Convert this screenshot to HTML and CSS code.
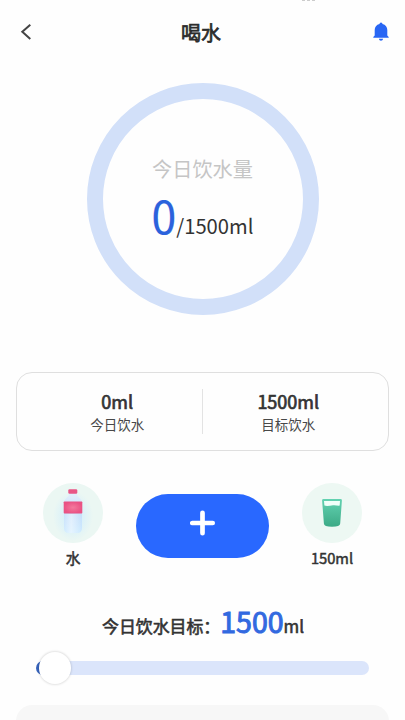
FILE: index.html
```html
<!DOCTYPE html>
<html lang="zh-CN">
<head>
<meta charset="utf-8">
<meta name="viewport" content="width=device-width, initial-scale=1">
<title>喝水</title>
<link rel="stylesheet" href="styles.css">
</head>
<body>
<main class="page">
  <div class="notch"><i></i><i></i><i></i></div>
  <header class="header">
    <svg class="back" width="12" height="18" viewBox="0 0 12 18"><path d="M10.300 1.700 2.300 8.800l8 7.100" fill="none" stroke="#444" stroke-width="2"/></svg>
    <h1 class="title">喝水</h1>
    <svg class="bell" width="16" height="20" viewBox="0 0 16 20"><path d="M6.500 2a1.500 1.500 0 0 1 3 0C12.600 2.700 14.300 5 14.300 8v5.500l1.400 1.400v.8H.3v-.8L1.700 13.500V8C1.700 5 3.400 2.700 6.500 2ZM5.900 16.800h4.200c-.2 1.300-1 1.900-2.100 1.900S6.100 18.100 5.900 16.800Z" fill="#2866f4"/></svg>
  </header>
  <section class="ring">
    <p class="ring-label">今日饮水量</p>
    <p class="ring-value"><span class="ring-now">0</span>/1500ml</p>
  </section>
  <section class="stats">
    <div class="stat"><strong>0ml</strong><span>今日饮水</span></div>
    <div class="stat"><strong>1500ml</strong><span>目标饮水</span></div>
  </section>
  <section class="actions">
    <div class="choice">
      <div class="disc disc-water">
        <svg width="60" height="60" viewBox="0 0 60 60">
          <defs>
            <linearGradient id="body" x1="0" y1="0" x2="0" y2="1"><stop offset="0" stop-color="#e3effc"/><stop offset=".55" stop-color="#c5dffb"/><stop offset="1" stop-color="#cdeaff"/></linearGradient>
            <linearGradient id="shine" x1="0" y1="0" x2="1" y2="0"><stop offset="0" stop-color="#fff" stop-opacity=".1"/><stop offset=".4" stop-color="#fff" stop-opacity=".5"/><stop offset="1" stop-color="#fff" stop-opacity="0"/></linearGradient>
            <radialGradient id="wrap"><stop offset="0" stop-color="#f3799d"/><stop offset="1" stop-color="#ea5284"/></radialGradient>
            <radialGradient id="glow"><stop offset=".3" stop-color="#d5effa"/><stop offset="1" stop-color="#d5effa" stop-opacity="0"/></radialGradient>
          </defs>
          <ellipse cx="30" cy="33" rx="20" ry="25" fill="url(#glow)"/>
          <path d="M26 10h8v2c1 2.500 5 4 5 8v25q0 5-5 5h-8q-5 0-5-5V20c0-4 4-5.500 5-8Z" fill="url(#body)"/>
          <path d="M21 31h18v14q0 5-5 5h-8q-5 0-5-5Z" fill="url(#shine)"/>
          <rect x="25.300" y="6.300" width="9" height="4.500" rx="1.300" fill="#e95686"/>
          <rect x="20.700" y="18.600" width="18.600" height="11.800" rx=".7" fill="url(#wrap)"/>
        </svg>
      </div>
      <span class="choice-label">水</span>
    </div>
    <button class="add" type="button" aria-label="添加">
      <svg width="26" height="26" viewBox="0 0 26 26"><path d="M12.500 2.800v20.400M2.300 13h20.400" stroke="#fff" stroke-width="4.700" stroke-linecap="round"/></svg>
    </button>
    <div class="choice">
      <div class="disc">
        <svg width="60" height="60" viewBox="0 0 60 60">
          <defs><linearGradient id="cup" x1="0" y1="0" x2="0" y2="1"><stop offset="0" stop-color="#63d2b1"/><stop offset="1" stop-color="#3caa86"/></linearGradient></defs>
          <path d="M21.500 16h17q1.500 0 1.400 1.500L38.200 40.500Q38 43.700 30 43.700T21.900 40.500L20.100 17.500Q20 16 21.500 16Z" fill="url(#cup)"/>
          <path d="M22 18h16l-.3 4.600c-2.300.2-4.200-.7-6.700-.4-3 .4-5.700 1.300-8.600.4Z" fill="#f1fff9"/>
        </svg>
      </div>
      <span class="choice-label">150ml</span>
    </div>
  </section>
  <p class="goal">今日饮水目标：<span class="goal-value">1500</span>ml</p>
  <div class="slider"><div class="thumb"></div></div>
  <section class="panel"></section>
</main>
</body>
</html>
```

FILE: styles.css
```css
* { box-sizing: border-box; margin: 0; padding: 0; }

body {
  background: #fefefe;
  color: #333;
  font-family: "Noto Sans CJK SC", sans-serif;
}

.page {
  position: relative;
  width: 405px;
  height: 720px;
  overflow: hidden;
  display: flex;
  flex-direction: column;
}

.notch {
  position: absolute;
  top: 0;
  left: 302px;
  display: flex;
  gap: 2px;
}
.notch i { width: 3px; height: 1px; background: #ccc; }

.header {
  height: 63px;
  flex: none;
  padding: 0 16px 0 20px;
  display: grid;
  grid-template-columns: 40px 1fr 47px;
  align-items: center;
}
.bell { justify-self: end; }
.title {
  padding-top: 2px;
  font-size: 20px;
  line-height: 30px;
  font-weight: 400;
  text-align: center;
  color: #2c2c2c;
  -webkit-text-stroke: 0.7px #2c2c2c;
}

.ring {
  flex: none;
  width: 232px;
  height: 232px;
  margin: 20px auto 0;
  border: 16px solid #d2e0f9;
  border-radius: 50%;
  padding-top: 55px;
  text-align: center;
}
.ring-label { font-size: 20.2px; line-height: 30px; color: #c5c5c5; }
.ring-value { font-size: 20.2px; line-height: 62px; white-space: nowrap; }
.ring-now { font-size: 44.5px; color: #2b62dc; -webkit-text-stroke: 0.2px #2b62dc; }

.stats {
  flex: none;
  height: 79px;
  margin: 57px 16px 0;
  padding: 16px 16px 16px 14px;
  border: 1px solid #dfdfdf;
  border-radius: 16px;
  display: grid;
  grid-template-columns: 1fr 1fr;
}
.stat { padding-left: 2px; display: flex; flex-direction: column; align-items: center; }
.stat + .stat { border-left: 1px solid #e3e3e3; }
.stat strong {
  margin-top: -1px;
  font-size: 18px;
  line-height: 26px;
  font-weight: 400;
  -webkit-text-stroke: 0.7px #333;
}
.stat span { font-size: 13.5px; line-height: 20px; color: #484848; }

.actions {
  flex: none;
  margin-top: 32px;
  padding: 0 43px;
  display: flex;
  justify-content: space-between;
  align-items: flex-start;
}
.choice { width: 60px; display: flex; flex-direction: column; align-items: center; }
.disc { width: 60px; height: 60px; border-radius: 50%; background: #edf8f3; }
.disc svg { display: block; }
.disc-water { background: #ebf7f3; }
.choice-label {
  margin-top: 4px;
  font-size: 14.7px;
  line-height: 22px;
  -webkit-text-stroke: 0.5px #333;
}
.add {
  width: 133px;
  height: 64px;
  margin-top: 11px;
  border: 0;
  border-radius: 32px;
  background: #2968ff;
  display: flex;
  align-items: center;
  justify-content: center;
  padding-bottom: 6px;
}

.goal {
  flex: none;
  height: 46px;
  margin-top: 29px;
  padding-left: 1px;
  font-size: 16.9px;
  line-height: 46px;
  text-align: center;
  -webkit-text-stroke: 0.6px #333;
}
.goal-value { font-size: 28.5px; color: #3269e0; -webkit-text-stroke: 1px #3269e0; }

.slider {
  flex: none;
  width: 333px;
  height: 14px;
  margin: 17px 0 0 36px;
  border-radius: 7px;
  background: linear-gradient(90deg, #3764bd 18px, #dbe5fb 18px);
  display: flex;
  align-items: center;
}
.thumb {
  flex: none;
  width: 32px;
  height: 32px;
  margin-left: 3px;
  border-radius: 50%;
  background: #fff;
  box-shadow: 0 0 2px 1px rgba(0, 0, 0, .11);
}

.panel {
  flex: none;
  height: 60px;
  margin: 30px 16px 0;
  border-radius: 16px;
  background: #f7f7f7;
}
```
